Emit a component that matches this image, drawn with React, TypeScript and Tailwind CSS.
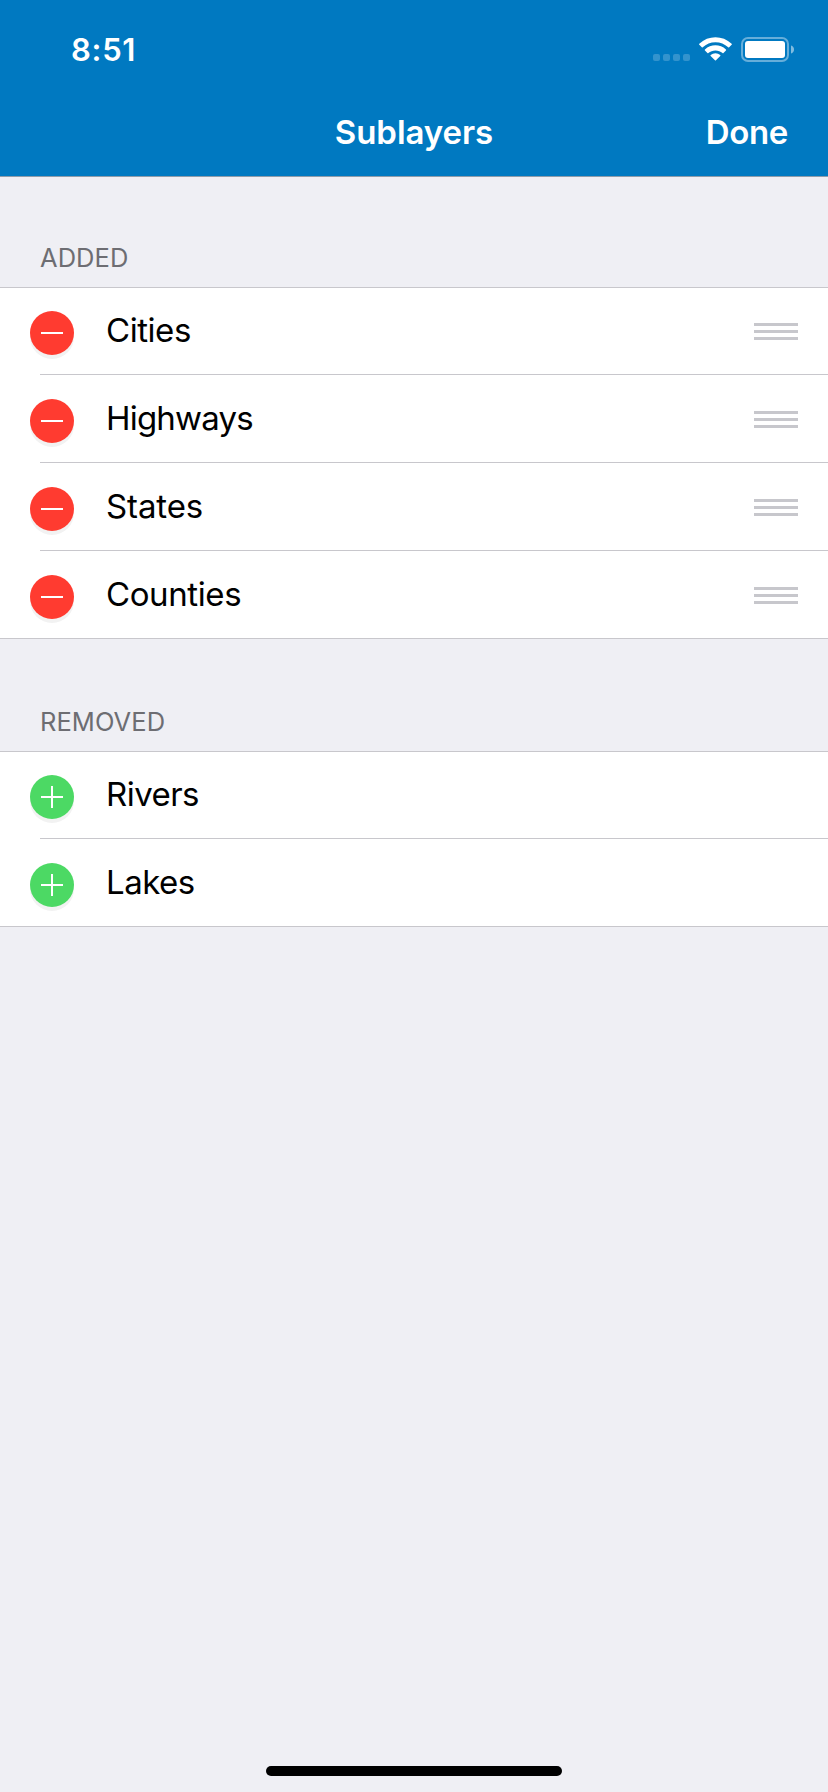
type Layer = { name: string; tracking: string };

const added: Layer[] = [
  { name: "Cities", tracking: "tracking-[-0.45px]" },
  { name: "Highways", tracking: "tracking-[-0.8px]" },
  { name: "States", tracking: "tracking-[-0.1px]" },
  { name: "Counties", tracking: "tracking-[-0.4px]" },
];

const removed: Layer[] = [
  { name: "Rivers", tracking: "tracking-[-0.55px]" },
  { name: "Lakes", tracking: "tracking-[-0.5px]" },
];

function StatusIcons() {
  return (
    <svg width="142" height="26" viewBox="0 0 142 26" fill="none" aria-hidden="true">
      <g fill="#fff" fillOpacity="0.2">
        <rect x="0" y="17" width="7" height="7" rx="2" />
        <rect x="10" y="17" width="7" height="7" rx="2" />
        <rect x="20" y="17" width="7" height="7" rx="2" />
        <rect x="30" y="17" width="7" height="7" rx="2" />
      </g>
      <g transform="translate(44.8 -0.2) scale(1.07 1.055)" fill="#fff">
        <path d="M16.5 5.1c4.5 0 8.7 1.75 11.9 4.85.25.24.64.23.88 0l2.35-2.4a.66.66 0 0 0 0-.95C23.2-1.6 9.8-1.6 1.4 6.6a.66.66 0 0 0 0 .95l2.35 2.4c.24.23.63.24.88 0C7.8 6.85 12 5.1 16.5 5.1Z" />
        <path d="M16.5 12.9c2.5 0 4.85.92 6.6 2.57.25.25.64.24.89 0l2.3-2.42a.68.68 0 0 0 0-.97c-5.5-5.3-14.1-5.3-19.6 0a.68.68 0 0 0 0 .97l2.3 2.42c.25.24.64.25.89 0 1.77-1.65 4.12-2.57 6.62-2.57Z" />
        <path d="M21 18.2c.27-.25.26-.66-.02-.9a6.9 6.9 0 0 0-8.96 0 .63.63 0 0 0-.02.9l4.04 4.1c.26.27.66.27.92 0L21 18.2Z" />
      </g>
      <rect x="89" y="1" width="46" height="23" rx="6" stroke="#fff" strokeOpacity="0.4" strokeWidth="2" />
      <rect x="92" y="4" width="40" height="17" rx="3" fill="#fff" />
      <path d="M138 8.5c1.9.6 3 2 3 4s-1.1 3.4-3 4v-8Z" fill="#fff" fillOpacity="0.5" />
    </svg>
  );
}

function ToggleButton({ kind }: { kind: "remove" | "add" }) {
  const color = kind === "remove" ? "bg-[#ff3b30]" : "bg-[#4cd964]";
  return (
    <button
      aria-label={kind}
      className={`mt-6 -ml-2.5 size-11 shrink-0 rounded-full shadow-[0_4px_0_#f2f2f2] ${color}`}
    >
      <svg width="44" height="44" viewBox="0 0 44 44" fill="#fff" aria-hidden="true">
        <rect x="11" y="21" width="22" height="2" />
        {kind === "add" && <rect x="21" y="11" width="2" height="22" />}
      </svg>
    </button>
  );
}

function Handle() {
  return (
    <div className="mt-9 mr-[30px] ml-auto flex w-11 flex-col gap-1">
      <div className="h-[3px] bg-[#c7c7cc]" />
      <div className="h-[3px] bg-[#c7c7cc]" />
      <div className="h-[3px] bg-[#c7c7cc]" />
    </div>
  );
}

function LayerList({ layers, kind }: { layers: Layer[]; kind: "remove" | "add" }) {
  return (
    <ul className="bg-white pl-10 shadow-[inset_0_1px_0_#c8c7cc,inset_0_-1px_0_#c8c7cc]">
      {layers.map((layer) => (
        <li
          key={layer.name}
          className="flex h-[88px] items-start border-b border-[#c8c7cc] last:border-transparent"
        >
          <ToggleButton kind={kind} />
          <span className={`ml-8 text-[33px] leading-[86px] text-black ${layer.tracking}`}>
            {layer.name}
          </span>
          {kind === "remove" && <Handle />}
        </li>
      ))}
    </ul>
  );
}

export default function App() {
  return (
    <div className="flex h-[1792px] w-[828px] flex-col bg-[#efeff4] font-['Inter',sans-serif]">
      <header className="h-[177px] border-b border-[#8d9cab] bg-[#0079c1] text-white">
        <div className="flex h-[88px] items-start justify-between pr-[33px] pl-[71px]">
          <span className="mt-[30px] text-[31px] leading-10 font-semibold tracking-[0.7px]">8:51</span>
          <div className="mt-[37px]">
            <StatusIcons />
          </div>
        </div>
        <nav className="grid h-[88px] grid-cols-[1fr_auto_1fr] items-center text-[33px] leading-10 font-semibold">
          <h1 className="col-start-2 tracking-[-0.05px]">Sublayers</h1>
          <button className="justify-self-end pr-10 tracking-[-0.37px]">Done</button>
        </nav>
      </header>

      <section>
        <h2 className="flex h-[110px] items-end pb-[13px] pl-10 text-[25.5px] leading-8 tracking-[0.05px] text-[#6d6d72]">
          ADDED
        </h2>
        <LayerList layers={added} kind="remove" />
      </section>

      <section>
        <h2 className="flex h-28 items-end pb-[13px] pl-10 text-[25.5px] leading-8 tracking-[0.05px] text-[#6d6d72]">
          REMOVED
        </h2>
        <LayerList layers={removed} kind="add" />
      </section>

      <div className="mx-auto mt-auto mb-4 h-2.5 w-[296px] rounded-full bg-black" />
    </div>
  );
}
